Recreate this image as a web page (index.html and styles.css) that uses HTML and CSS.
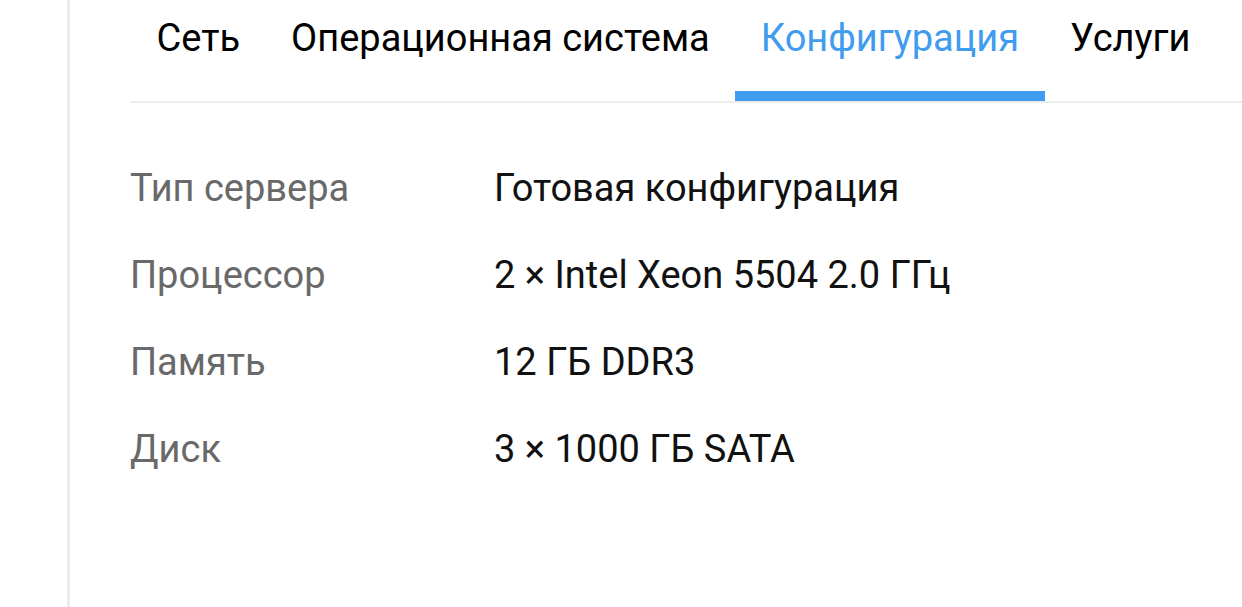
FILE: index.html
```html
<!DOCTYPE html>
<html lang="ru">
<head>
<meta charset="utf-8">
<link rel="stylesheet" href="styles.css">
</head>
<body>
<div class="page">
  <div class="panel">
    <nav class="tabs">
      <div class="tab">Сеть</div>
      <div class="tab">Операционная система</div>
      <div class="tab active">Конфигурация</div>
      <div class="tab">Услуги</div>
    </nav>
    <dl class="specs">
      <div class="row"><dt>Тип сервера</dt><dd>Готовая конфигурация</dd></div>
      <div class="row"><dt>Процессор</dt><dd>2 × Intel Xeon 5504 2.0 ГГц</dd></div>
      <div class="row"><dt>Память</dt><dd>12 ГБ DDR3</dd></div>
      <div class="row"><dt>Диск</dt><dd>3 × 1000 ГБ SATA</dd></div>
    </dl>
  </div>
</div>
</body>
</html>
```
FILE: styles.css
```css
html, body {
  margin: 0;
  padding: 0;
  background: #fff;
  height: 100%;
  overflow: hidden;
}
body {
  font-family: Roboto, "Noto Sans", sans-serif;
  color: #111;
}
.page {
  height: 100%;
  padding-left: 67px;
}
.panel {
  height: 100%;
  border-left: 3px solid #ececec;
  padding-left: 60px;
}
.tabs {
  display: flex;
  border-bottom: 2px solid #ededed;
  height: 103px;
  box-sizing: border-box;
  margin: 0;
  padding-left: 1px;
}
.tab {
  font-size: 38px;
  line-height: 1;
  padding: 19px 25.5px 0;
  height: 100%;
  box-sizing: border-box;
  color: #000;
  white-space: nowrap;
}
.tab.active {
  color: #3f9cee;
  border-bottom: 10px solid #3f9cee;
}
.specs {
  margin: 0;
  padding-top: 66px;
}
.row {
  display: flex;
  height: 87px;
  font-size: 38px;
  line-height: 1;
}
dt {
  width: 364px;
  color: #696969;
  margin: 0;
}
dd {
  margin: 0;
  color: #111;
}
```
